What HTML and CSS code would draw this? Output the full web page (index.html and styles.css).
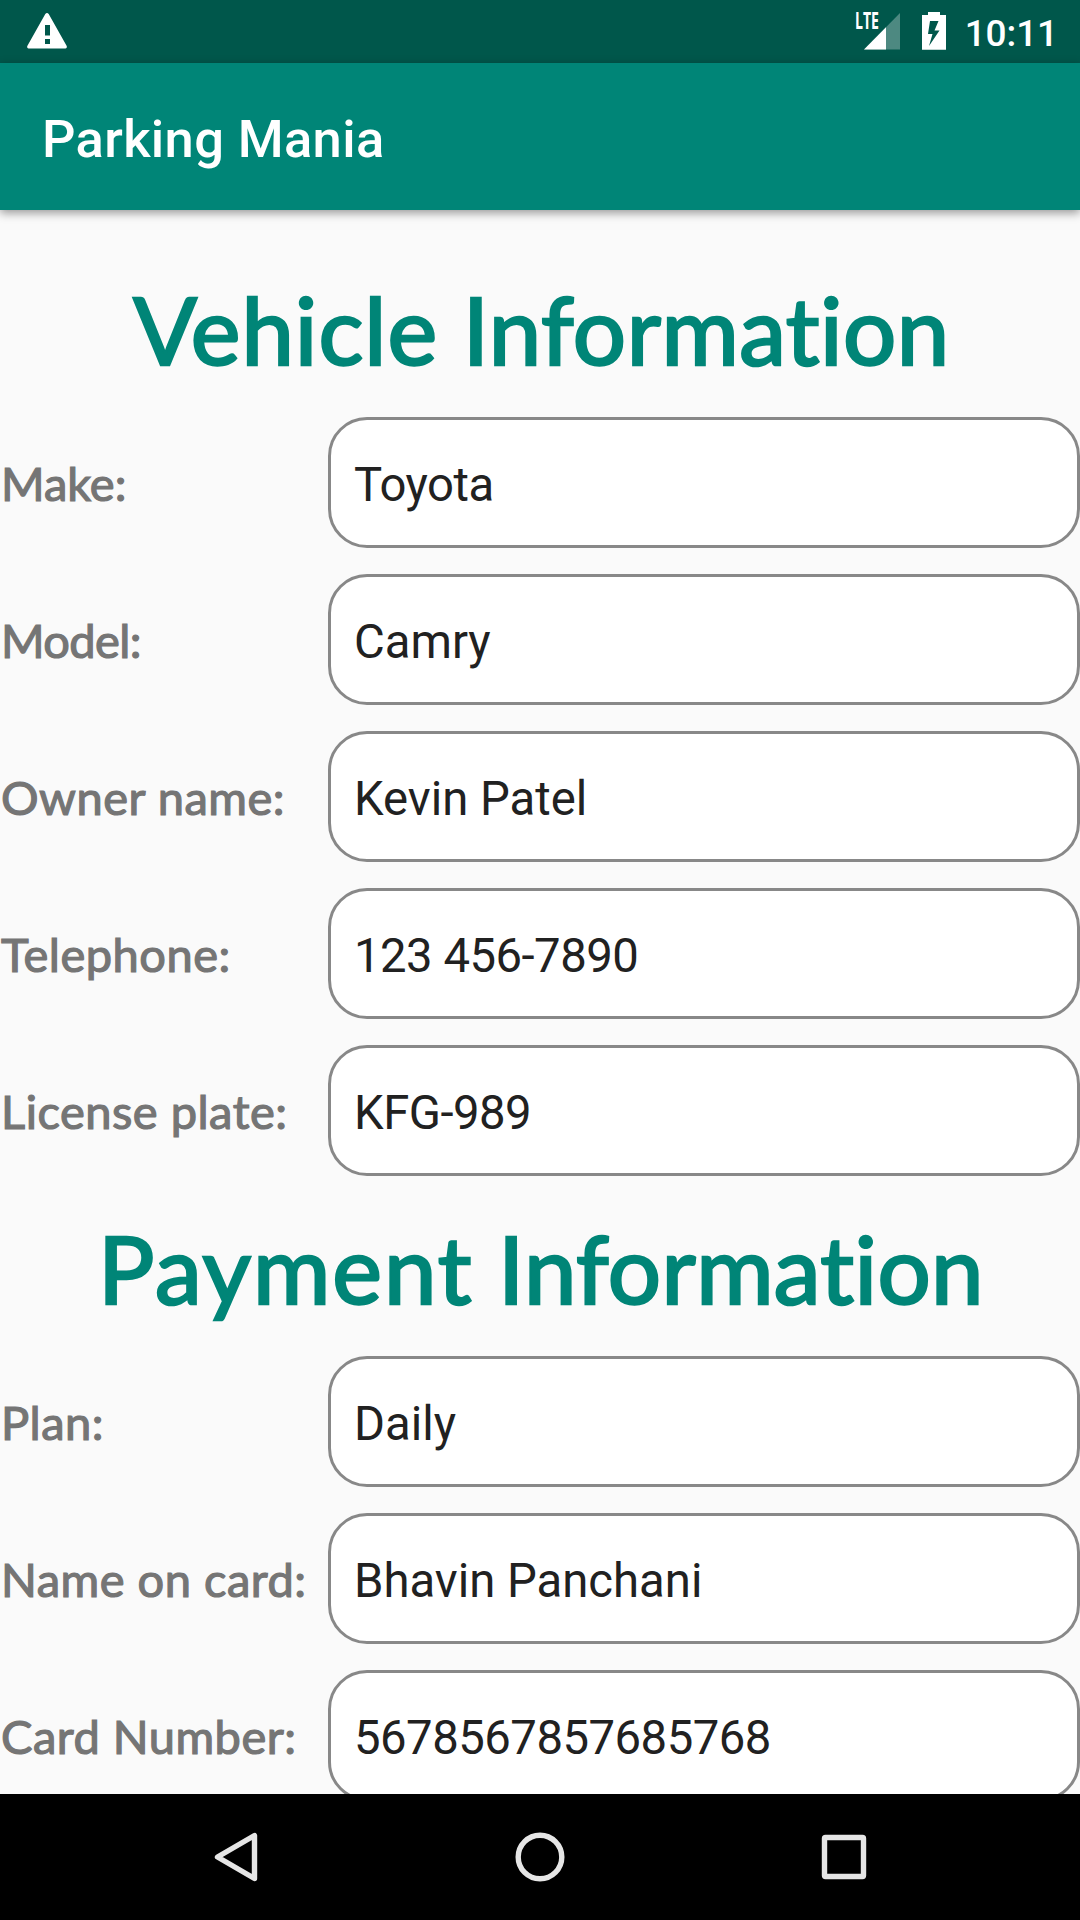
FILE: index.html
```html
<!DOCTYPE html>
<html lang="en">
<head>
<meta charset="utf-8">
<title>Parking Mania</title>
<link rel="stylesheet" href="styles.css">
</head>
<body>
<div class="screen">
  <header class="status-bar">
    <svg class="warning" width="40" height="36" viewBox="0 0 40 36"><path fill="#fff" fill-rule="evenodd" d="M18.3 1Q20 -1 21.700 1L39.700 33Q40.300 35.500 38.500 35.500H1.500Q-.3 35.500 .3 33ZM18 12v10.500h5V12ZM18 26v5h5v-5Z"/></svg>
    <div class="status-icons">
      <svg class="signal" width="46" height="38" viewBox="0 0 46 38">
        <path fill="#fff" fill-opacity=".3" d="M45 1V37.500H9Z"/>
        <path fill="#fff" d="M31 15.200V37.500H9Z"/>
        <path class="knockout" d="M0 0h26v18H0z"/>
        <text class="lte" x="0" y="17" textLength="24" lengthAdjust="spacingAndGlyphs">LTE</text>
      </svg>
      <svg class="battery" width="24" height="38" viewBox="0 0 24 38"><path fill="#fff" fill-rule="evenodd" d="M6 0h12v3h6v34.700H0V3h6ZM8 9 6 22h4.500L7 34 17.500 18.500H12.500L16.500 9Z"/></svg>
      <span class="clock">10:11</span>
    </div>
  </header>
  <div class="app-bar"><h1 class="app-title">Parking Mania</h1></div>
  <main class="form">
    <h2 class="section-title vehicle-title"><span class="lead">Vehicle</span> Information</h2>
    <div class="fields">
      <div class="field"><span class="label label-normal">Make:</span><div class="value value-tight">Toyota</div></div>
      <div class="field"><span class="label label-tight">Model:</span><div class="value">Camry</div></div>
      <div class="field"><span class="label">Owner name:</span><div class="value">Kevin Patel</div></div>
      <div class="field"><span class="label">Telephone:</span><div class="value value-tight">123 456-7890</div></div>
      <div class="field"><span class="label">License plate:</span><div class="value value-tight">KFG-989</div></div>
    </div>
    <h2 class="section-title payment-title"><span class="lead">Payment</span> Information</h2>
    <div class="fields">
      <div class="field"><span class="label">Plan:</span><div class="value">Daily</div></div>
      <div class="field"><span class="label">Name on card:</span><div class="value">Bhavin Panchani</div></div>
      <div class="field"><span class="label">Card Number:</span><div class="value value-tight">5678567857685768</div></div>
    </div>
  </main>
  <nav class="nav-bar">
    <svg class="nav-icon" viewBox="0 0 60 60"><path d="M48.500 8.500V51.500L11.500 30Z"/></svg>
    <svg class="nav-icon" viewBox="0 0 60 60"><circle cx="30" cy="30" r="21.800"/></svg>
    <svg class="nav-icon" viewBox="0 0 60 60"><rect x="10.500" y="10.500" width="39" height="39" rx="1"/></svg>
  </nav>
</div>
</body>
</html>
```
FILE: styles.css
```css
* { box-sizing: border-box; }
body { margin: 0; background: #fafafa; font-family: Roboto, sans-serif; }
.screen { width: 1080px; height: 1920px; display: flex; flex-direction: column; overflow: hidden; }
.status-bar { flex: none; height: 63px; padding: 0 22px 0 27px; background: #00574b; display: flex; align-items: flex-start; justify-content: space-between; }
.warning { margin-top: 13px; }
.status-icons { display: flex; align-items: flex-start; }
.signal { margin-top: 12px; overflow: visible; }
.knockout { fill: #00574b; }
.lte { font: 700 22.500px "Open Sans", sans-serif; fill: #fff; }
.battery { margin: 12px 19px 0 21px; }
.clock { color: #fff; font-size: 37px; line-height: 43px; margin-top: 12px; font-weight: 500; letter-spacing: -.1px; }
.app-bar { flex: none; height: 147px; padding-left: 42px; background: #008577; display: flex; align-items: center; position: relative; box-shadow: 0 3px 9px rgba(0,0,0,.4); }
.app-title { margin: 4px 0 0; color: #fff; font-size: 52.500px; font-weight: 500; line-height: 62px; letter-spacing: .35px; }
.form { flex: 1; min-height: 0; overflow: hidden; padding-top: 67px; }
.section-title { margin: 0; height: 140px; line-height: 104px; text-align: center; color: #008577; font-family: Lato, sans-serif; font-size: 94px; font-weight: 400; letter-spacing: .5px; -webkit-text-stroke: 2.500px #008577; white-space: nowrap; font-variant-ligatures: none; }
.vehicle-title { padding-left: 3px; }
.vehicle-title .lead { letter-spacing: 1px; }
.payment-title { margin-top: 40px; padding-left: 2px; letter-spacing: .4px; }
.payment-title .lead { letter-spacing: 2px; }
.fields { display: flex; flex-direction: column; gap: 26px; }
.field { display: grid; grid-template-columns: 328px 752px; height: 131px; align-items: center; }
.label { padding-left: 1px; color: #757575; font-family: Lato, sans-serif; font-size: 47px; letter-spacing: .5px; -webkit-text-stroke: 1.200px #757575; white-space: nowrap; }
.label-normal { letter-spacing: 0; }
.label-tight { letter-spacing: -.6px; }
.value { height: 131px; border: 3px solid #888; border-radius: 39px; background: #fff; color: #212121; font-size: 47.250px; line-height: 131px; padding-left: 23px; }
.value-tight { letter-spacing: -.5px; }
.nav-bar { flex: none; height: 126px; background: #000; display: flex; align-items: center; justify-content: center; gap: 244px; }
.nav-icon { width: 60px; height: 60px; fill: none; stroke: #e6e6e6; stroke-width: 5.400; stroke-linejoin: round; }
```
